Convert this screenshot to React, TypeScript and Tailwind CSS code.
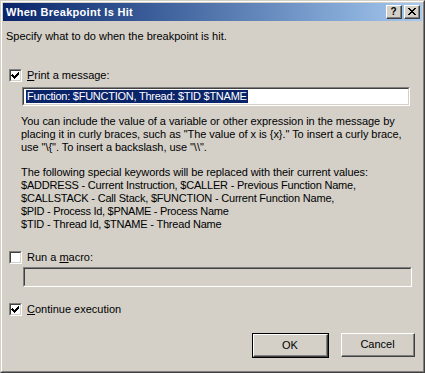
import React from "react";

const font = { fontFamily: '"Liberation Sans", Arial, sans-serif' };

function CheckBox({ checked }: { checked: boolean }) {
    return (
        <div className="w-[13px] h-[13px] shrink-0 border-t border-l border-t-[#808080] border-l-[#808080] border-b border-r border-b-white border-r-white">
            <div className="w-full h-full bg-white border-t border-l border-t-[#404040] border-l-[#404040] border-b border-r border-b-[#d4d0c8] border-r-[#d4d0c8] flex items-center justify-center">
                {checked && (
                    <svg width="9" height="9" viewBox="0 0 9 9" shapeRendering="crispEdges">
                        <path d="M1 3h1v1h1v1h1v-1h1v-1h1v-1h1v-1h1v3h-1v1h-1v1h-1v1h-1v1h-1v-1h-1v-1h-1v-1h-1z" fill="#000" />
                    </svg>
                )}
            </div>
        </div>
    );
}

function CheckRow({ checked, children }: { checked: boolean; children: React.ReactNode }) {
    return (
        <div className="flex items-center gap-[5px] ml-[6px]">
            <CheckBox checked={checked} />
            <span className="text-[11px] leading-[13px] text-black">{children}</span>
        </div>
    );
}

function Sunken({ className, children }: { className: string; children?: React.ReactNode }) {
    return (
        <div className={"border-t border-l border-t-[#808080] border-l-[#808080] border-b border-r border-b-white border-r-white " + className}>
            <div className="w-full h-full border-t border-l border-t-[#404040] border-l-[#404040] border-b border-r border-b-[#d4d0c8] border-r-[#d4d0c8] flex items-center">
                {children}
            </div>
        </div>
    );
}

function Button({ label, isDefault }: { label: string; isDefault?: boolean }) {
    const inner = (
        <div className="w-full h-full border-t border-l border-t-white border-l-white border-b border-r border-b-[#404040] border-r-[#404040]">
            <div className="w-full h-full border-b border-r border-b-[#808080] border-r-[#808080] flex items-center justify-center text-[11px] text-black">
                {label}
            </div>
        </div>
    );
    if (isDefault) {
        return <div className="w-[77px] h-[25px] border border-black">{inner}</div>;
    }
    return <div className="w-[74px] h-[24px]">{inner}</div>;
}

function CaptionButton({ children }: { children: React.ReactNode }) {
    return (
        <div className="w-[16px] h-[14px] bg-[#d4d0c8] border-t border-l border-t-white border-l-white border-b border-r border-b-[#404040] border-r-[#404040]">
            <div className="w-full h-full border-b border-r border-b-[#808080] border-r-[#808080] flex items-center justify-center">
                {children}
            </div>
        </div>
    );
}

export default function App() {
    return (
        <div style={font} className="w-[425px] h-[373px] border border-t-[#d4d0c8] border-l-[#d4d0c8] border-b-[#404040] border-r-[#404040]">
            <div className="w-full h-full border border-t-white border-l-white border-b-[#808080] border-r-[#808080] bg-[#d4d0c8] p-px flex flex-col">
                {/* Caption */}
                <div className="h-[18px] flex items-center justify-between pl-[3px] pr-[2px] bg-gradient-to-r from-[#0a246a] to-[#a6caf0]">
                    <span className="text-white font-bold text-[11px] tracking-[0.3px]">When Breakpoint Is Hit</span>
                    <div className="flex gap-[2px]">
                        <CaptionButton>
                            <span className="text-[10px] font-bold leading-none text-black">?</span>
                        </CaptionButton>
                        <CaptionButton>
                            <svg width="8" height="7" viewBox="0 0 8 7" shapeRendering="crispEdges">
                                <path d="M0 0h2v1h1v1h2v-1h1v-1h2v1h-1v1h-1v1h-1v1h1v1h1v1h1v1h-2v-1h-1v-1h-2v1h-1v1h-2v-1h1v-1h1v-1h1v-1h-1v-1h-1v-1h-1z" fill="#000" />
                            </svg>
                        </CaptionButton>
                    </div>
                </div>

                {/* Body */}
                <div className="flex-1 flex flex-col text-black">
                    <p className="text-[11px] leading-[13px] ml-[3px] mt-[9px]">Specify what to do when the breakpoint is hit.</p>

                    <div className="mt-[26px]">
                        <CheckRow checked>
                            <span className="underline">P</span>rint a message:
                        </CheckRow>
                    </div>

                    <Sunken className="ml-[19px] mt-[5px] w-[388px] h-[19px] bg-white">
                        <span className="ml-[2px] px-px bg-[#0a246a] text-white text-[11px] leading-[13px] tracking-[-0.25px]">
                            Function: $FUNCTION, Thread: $TID $TNAME
                        </span>
                    </Sunken>

                    <div className="ml-[18px] mt-[9px] text-[11px] leading-[13px] tracking-[-0.05px]">
                        <p>You can include the value of a variable or other expression in the message by</p>
                        <p>placing it in curly braces, such as "The value of x is {"{x}"}." To insert a curly brace,</p>
                        <p>use "\{"{"}". To insert a backslash, use "\\".</p>
                        <p className="mt-[12px] tracking-[-0.08px]">The following special keywords will be replaced with their current values:</p>
                        <p className="tracking-[-0.2px]">$ADDRESS - Current Instruction, $CALLER - Previous Function Name,</p>
                        <p className="tracking-[-0.2px]">$CALLSTACK - Call Stack, $FUNCTION - Current Function Name,</p>
                        <p className="tracking-[-0.3px]">$PID - Process Id, $PNAME - Process Name</p>
                        <p className="tracking-[-0.2px]">$TID - Thread Id, $TNAME - Thread Name</p>
                    </div>

                    <div className="mt-[20px]">
                        <CheckRow checked={false}>
                            Run a <span className="underline">m</span>acro:
                        </CheckRow>
                    </div>

                    <Sunken className="ml-[20px] mt-[3px] w-[389px] h-[20px] bg-[#d4d0c8]" />

                    <div className="mt-[16px]">
                        <CheckRow checked>
                            <span className="underline">C</span>ontinue execution
                        </CheckRow>
                    </div>

                    <div className="flex justify-end gap-[12px] mr-[7px] mt-[17px]">
                        <Button label="OK" isDefault />
                        <Button label="Cancel" />
                    </div>
                </div>
            </div>
        </div>
    );
}
